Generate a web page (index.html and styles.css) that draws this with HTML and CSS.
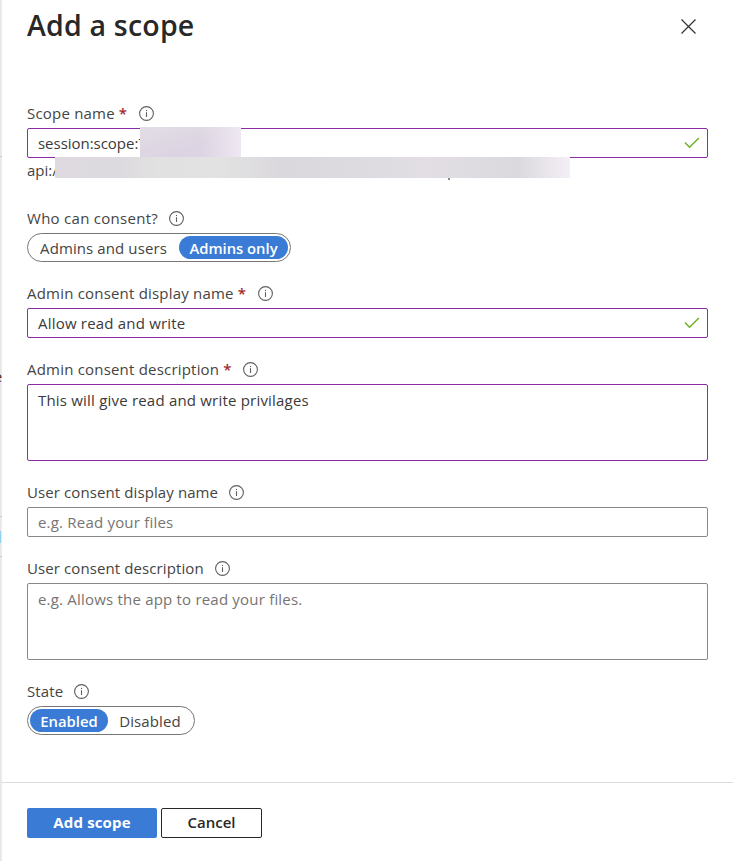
FILE: index.html
```html
<!DOCTYPE html>
<html lang="en">
<head>
<meta charset="utf-8">
<title>Add a scope</title>
<link rel="stylesheet" href="styles.css">
</head>
<body>
<svg class="defs" aria-hidden="true">
  <symbol id="info" viewBox="0 0 15 15">
    <circle cx="7.5" cy="7.5" r="6.9" fill="none" stroke="#605e5c" stroke-width="1.1"/>
    <path d="M7.5 6.2V11" stroke="#605e5c" stroke-width="1.1"/>
    <path d="M7.5 3.9v1.2" stroke="#605e5c" stroke-width="1.1"/>
  </symbol>
  <symbol id="check" viewBox="0 0 16 12">
    <path d="M1 5.6 5.5 10.2 14.9 1" fill="none" stroke="#6bb01e" stroke-width="1.4"/>
  </symbol>
</svg>
<div class="page">
  <div class="backdrop">
    <span class="rule rule-top"></span>
    <span class="peek">e</span>
    <span class="rule rule-mid"></span>
    <span class="chip"></span>
    <span class="rule rule-low"></span>
  </div>
  <main class="panel">
    <header class="header">
      <h1 class="title">Add a scope</h1>
      <svg class="close" viewBox="0 0 15 15"><path d="M.5.5 14.5 14.5M14.5.5.5 14.5" stroke="#323130" stroke-width="1.2"/></svg>
    </header>

    <form class="form">
      <section class="group">
        <div class="label"><span>Scope name</span><span class="star">*</span><svg class="info"><use href="#info"/></svg></div>
        <div class="input edited scope">session:scope:7<span class="redact redact-name"></span><svg class="check"><use href="#check"/></svg></div>
        <div class="hint">api://<span class="redact redact-uri"></span><span class="descender"></span></div>
      </section>

      <section class="group">
        <div class="label"><span class="wide">Who can consent?</span><svg class="info"><use href="#info"/></svg></div>
        <div class="pill consent"><span class="option">Admins and users</span><span class="option selected">Admins only</span></div>
      </section>

      <section class="group">
        <div class="label"><span>Admin consent display name</span><span class="star">*</span><svg class="info"><use href="#info"/></svg></div>
        <div class="input edited">Allow read and write<svg class="check"><use href="#check"/></svg></div>
      </section>

      <section class="group">
        <div class="label"><span>Admin consent description</span><span class="star">*</span><svg class="info"><use href="#info"/></svg></div>
        <div class="input area edited">This will give read and write privilages</div>
      </section>

      <section class="group">
        <div class="label"><span class="tight">User consent display name</span><svg class="info"><use href="#info"/></svg></div>
        <div class="input empty">e.g. Read your files</div>
      </section>

      <section class="group">
        <div class="label"><span class="tight">User consent description</span><svg class="info"><use href="#info"/></svg></div>
        <div class="input area empty">e.g. Allows the app to read your files.</div>
      </section>

      <section class="group">
        <div class="label"><span class="tight">State</span><svg class="info"><use href="#info"/></svg></div>
        <div class="pill state"><span class="option selected">Enabled</span><span class="option">Disabled</span></div>
      </section>
    </form>

    <footer class="footer">
      <div class="button primary">Add scope</div>
      <div class="button secondary">Cancel</div>
    </footer>
  </main>
</div>
</body>
</html>
```
FILE: styles.css
```css
* { box-sizing: border-box; }
body {
  margin: 0;
  background: #fff;
  color: #454443;
  font: 15px/20px "Open Sans", "Noto Sans", sans-serif;
}
.defs { position: absolute; width: 0; height: 0; }
.page { display: flex; width: 733px; height: 861px; overflow: hidden; }

.backdrop {
  position: relative;
  flex: none;
  width: 2px;
  overflow: hidden;
  background: linear-gradient(90deg, #e5e5e5, #eee);
}
.rule, .chip, .peek { position: absolute; right: 0; }
.rule { width: 2px; height: 1px; background: #c8c8c8; }
.rule-top { top: 156px; }
.rule-mid { top: 516px; }
.rule-low { top: 556px; }
.chip { right: 1px; top: 531px; width: 1px; height: 12px; background: #8fd0f0; }
.peek { top: 367px; color: #5a2222; font-size: 14px; }

.panel { flex: 1; display: flex; flex-direction: column; }
.header {
  display: flex;
  justify-content: space-between;
  align-items: flex-start;
  height: 104px;
  padding: 5px 37px 0 25px;
}
.title {
  margin: 0;
  color: #292827;
  font-size: 28.5px;
  font-weight: 600;
  line-height: 40px;
  letter-spacing: .2px;
}
.close { width: 15px; height: 15px; margin-top: 14px; }

.form { display: flex; flex-direction: column; gap: 22px; height: 678px; padding: 0 25px; }
.label { display: flex; align-items: center; height: 24px; padding-bottom: 5px; line-height: 19px; letter-spacing: .2px; }
.label .wide { letter-spacing: .28px; }
.label .tight { letter-spacing: .1px; }
.star { width: 8px; margin-left: 4px; color: #a4262c; font-weight: 600; }
.info { width: 15px; height: 15px; margin-left: 11px; }
.star + .info { margin-left: 12px; }

.input {
  position: relative;
  display: flex;
  justify-content: space-between;
  align-items: center;
  height: 30px;
  padding: 0 7px 0 10px;
  border: 1px solid #8a8886;
  border-radius: 2px;
  letter-spacing: .2px;
  color: #3b3a39;
}
.edited { border-color: #8a2da5; }
.scope { letter-spacing: -.03px; }
.empty { color: #767472; }
.area { height: 77px; padding-top: 5px; align-items: flex-start; }
.check { width: 16px; height: 12px; }

.hint { position: relative; height: 29px; padding-top: 2px; }
.redact { position: absolute; }
.redact-name {
  left: 112px;
  top: -2px;
  width: 101px;
  height: 30px;
  background: linear-gradient(165deg, #e2dee5, #dcd4e2 60%);
}
.redact-name::after {
  content: "";
  position: absolute;
  inset: 0 0 0 60%;
  background: linear-gradient(90deg, rgba(238, 230, 243, 0), #eee8f2);
}
.redact-uri {
  left: 28px;
  top: -1px;
  width: 515px;
  height: 21px;
  background: linear-gradient(90deg, #dedae0, #dcd9df 12%, #e1e1e1 20%, #e2e2e2 32%, #dbd8dd 44%, #dddbdf 58%, #e2dee4 72%, #dbd9de 90%, #f4eff6);
}
.descender { position: absolute; left: 421px; top: 20px; width: 2px; height: 2px; background: #8b8a89; }

.pill {
  display: flex;
  align-items: center;
  height: 29px;
  padding: 0 2px;
  border: 1px solid #797775;
  border-radius: 15px;
}
.option { height: 23px; padding: 0 10px; line-height: 24px; border-radius: 12px; text-align: center; letter-spacing: .1px; white-space: nowrap; }
.selected { background: #3a7bd5; color: #fff; font-size: 14.8px; font-weight: 600; letter-spacing: 0; }
.consent { width: 264px; }
.consent .option { flex: 1; padding: 0 11px 0 9px; }
.consent .selected { flex: 0 0 109px; padding: 0; }
.state { width: 168px; }
.state .option { flex: 1; }
.state .selected { flex: 0 0 78px; padding: 0; }

.footer {
  display: flex;
  gap: 4px;
  height: 79px;
  padding: 25px 25px 0;
  border-top: 1px solid #dcdbda;
}
.button { height: 30px; border-radius: 2px; line-height: 29px; text-align: center; }
.primary { width: 130px; background: #3a7bd5; color: #fff; font-weight: 700; letter-spacing: .15px; }
.secondary { width: 101px; border: 1px solid #292827; color: #292827; font-weight: 600; line-height: 27px; }
```
